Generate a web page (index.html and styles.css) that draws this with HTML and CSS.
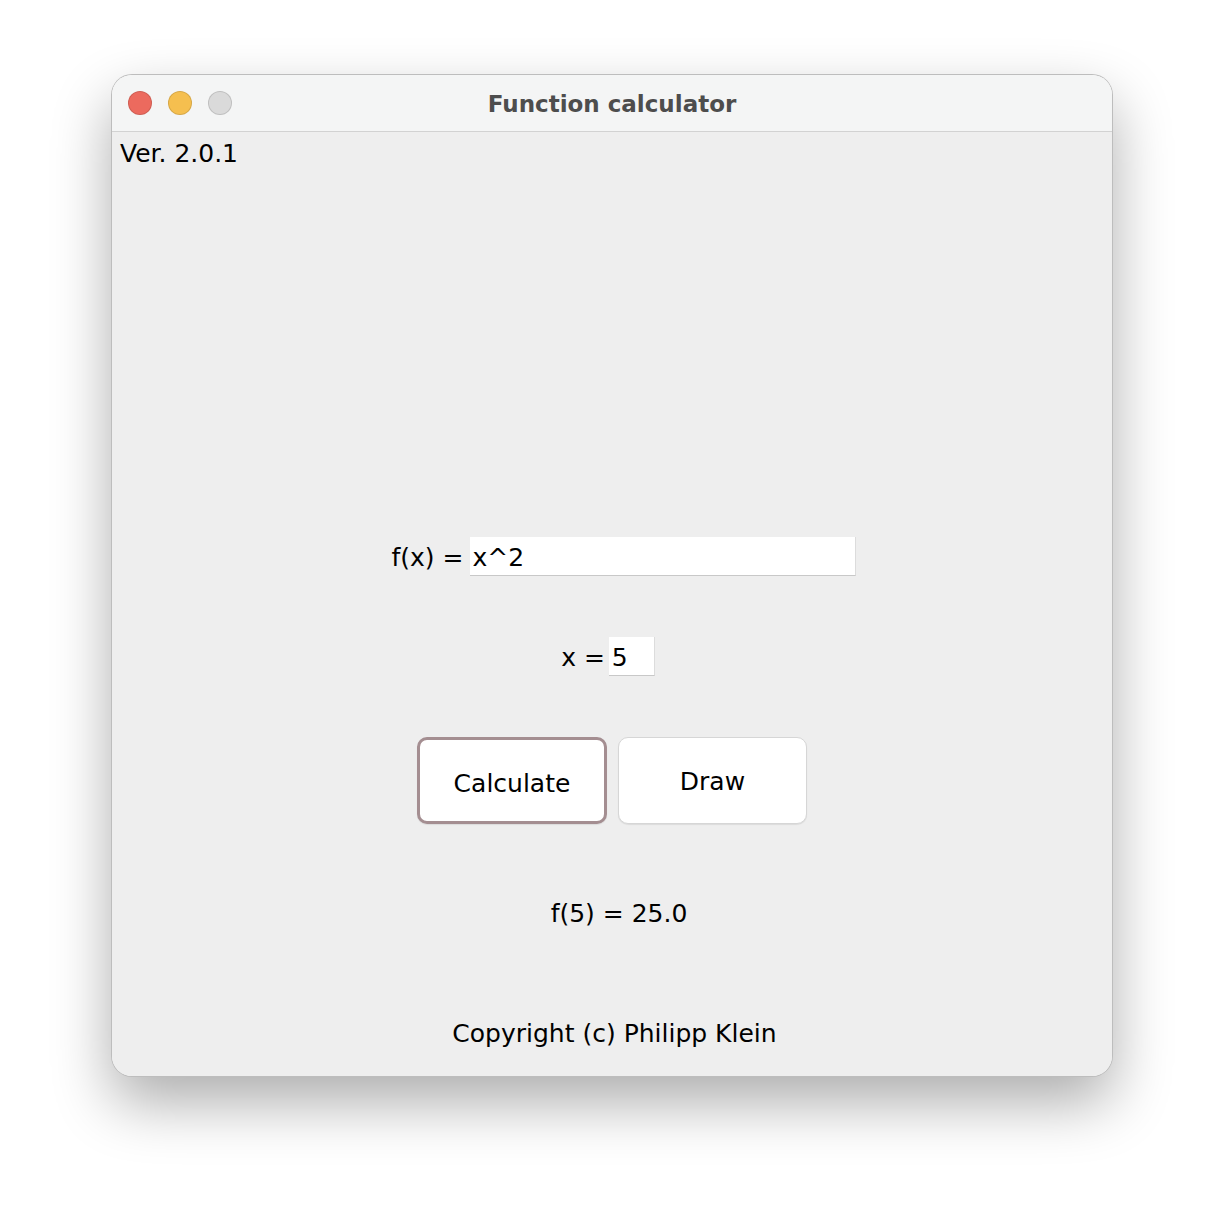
FILE: index.html
```html
<!DOCTYPE html>
<html lang="en">
<head>
    <meta charset="UTF-8">
    <title>Function calculator</title>
    <link rel="stylesheet" href="styles.css">
</head>
<body>
<div class="window">
    <div class="titlebar">
        <div class="lights">
            <span class="light red"></span>
            <span class="light yellow"></span>
            <span class="light gray"></span>
        </div>
        <div class="title">Function calculator</div>
    </div>
    <div class="content">
        <div class="version">Ver. 2.0.1</div>
        <div class="row row_fx">
            <span class="label">f(x) =</span>
            <input class="field field_fx" type="text" value="x^2">
        </div>
        <div class="row row_x">
            <span class="label">x =</span>
            <input class="field field_x" type="text" value="5">
        </div>
        <div class="row row_btns">
            <button class="btn btn_focus">Calculate</button>
            <button class="btn">Draw</button>
        </div>
        <div class="result">f(5) = 25.0</div>
        <div class="copyright">Copyright (c) Philipp Klein</div>
    </div>
</div>
</body>
</html>
```

FILE: styles.css
```css
body {
    margin: 0;
    padding: 75px 0 148px;
    background: #ffffff;
    font-family: "DejaVu Sans", sans-serif;
    color: #000;
}
.window {
    width: 1000px;
    height: 1001px;
    margin: 0 auto;
    border-radius: 20px;
    overflow: hidden;
    box-shadow: 0 0 0 1px #bdbdbd, 0 26px 60px rgba(0, 0, 0, 0.33);
    display: flex;
    flex-direction: column;
}
.titlebar {
    height: 56px;
    background: #f4f5f5;
    border-bottom: 1px solid #d2d2d2;
    position: relative;
    display: flex;
    align-items: center;
    justify-content: center;
}
.lights {
    position: absolute;
    left: 16px;
    top: 16px;
    display: flex;
    gap: 16px;
}
.light {
    width: 22px;
    height: 22px;
    border-radius: 50%;
    border: 1px solid rgba(0, 0, 0, 0.12);
}
.red { background: #ec6a5e; }
.yellow { background: #f5bf4f; }
.gray { background: #dadada; }
.title {
    font-weight: bold;
    font-size: 23px;
    color: #4d4d4d;
    padding-top: 2px;
}
.content {
    flex: 1;
    background: #eeeeee;
    font-size: 25px;
}
.version {
    padding: 6px 8px 2px;
    line-height: 32px;
}
.row {
    display: flex;
    justify-content: center;
    align-items: center;
}
.label {
    padding-top: 2px;
}
.row_fx {
    margin-top: 365px;
    height: 39px;
    padding-left: 23px;
    gap: 6px;
}
.row_x {
    margin-top: 61px;
    height: 39px;
    padding-right: 8px;
    gap: 4px;
}
.field {
    font-family: "DejaVu Sans", sans-serif;
    font-size: 25px;
    height: 39px;
    box-sizing: border-box;
    border: none;
    border-bottom: 1px solid #c8c8c8;
    border-right: 1px solid #dcdcdc;
    background: #fff;
    padding: 2px 3px 0;
    margin: 0;
    outline: none;
}
.field_fx { width: 386px; }
.field_x { width: 46px; }
.row_btns {
    margin-top: 61px;
    height: 87px;
    gap: 11px;
}
.btn {
    width: 189px;
    height: 87px;
    background: #fff;
    border: 1px solid #d6d6d6;
    border-radius: 10px;
    font-family: "DejaVu Sans", sans-serif;
    font-size: 25px;
    color: #000;
    box-shadow: 0 1px 1px rgba(0, 0, 0, 0.08);
    padding: 2px 0 0;
}
.btn_focus {
    width: 190px;
    border: 3px solid #a48e91;
    padding-top: 5px;
}
.result {
    margin-top: 75px;
    line-height: 30px;
    text-align: center;
    padding-left: 14px;
}
.copyright {
    margin-top: 90px;
    line-height: 30px;
    text-align: center;
    padding-left: 5px;
}
```
